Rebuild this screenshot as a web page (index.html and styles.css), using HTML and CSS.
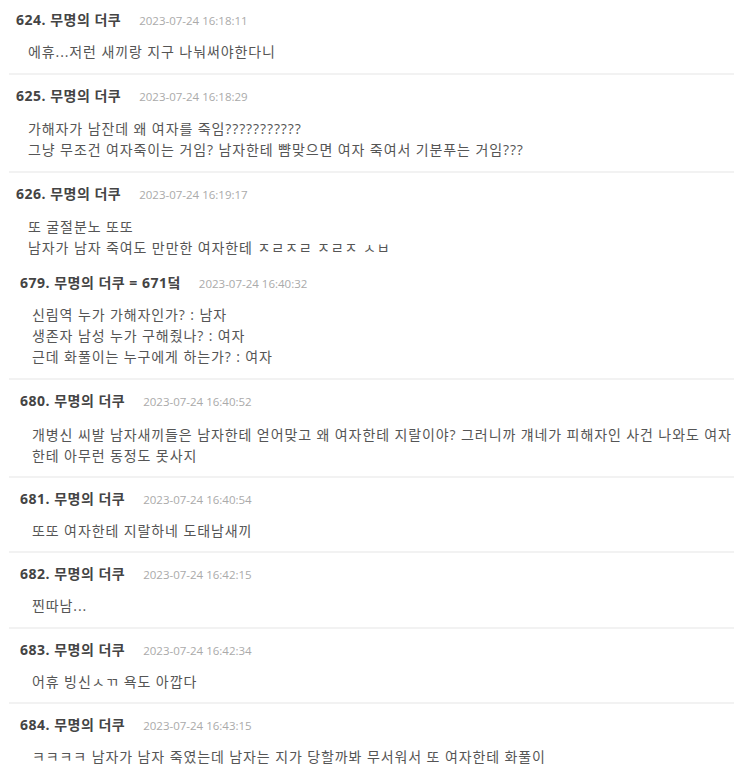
FILE: index.html
```html
<!DOCTYPE html>
<html lang="ko">
<head>
  <meta charset="UTF-8">
  <meta name="viewport" content="width=device-width, initial-scale=1">
  <title>댓글</title>
  <link rel="stylesheet" href="styles.css">
</head>
<body>
  <!-- first capture -->
  <div class="thread">
    <div class="post first">
      <div class="post-head"><span class="num">624. 무명의 더쿠</span><span class="date">2023-07-24 16:18:11</span></div>
      <div class="post-body">에휴...저런 새끼랑 지구 나눠써야한다니</div>
    </div>
    <div class="post multi">
      <div class="post-head"><span class="num">625. 무명의 더쿠</span><span class="date">2023-07-24 16:18:29</span></div>
      <div class="post-body">가해자가 남잔데 왜 여자를 죽임???????????<br>그냥 무조건 여자죽이는 거임? 남자한테 뺨맞으면 여자 죽여서 기분푸는 거임???</div>
    </div>
    <div class="post multi no-line">
      <div class="post-head"><span class="num">626. 무명의 더쿠</span><span class="date">2023-07-24 16:19:17</span></div>
      <div class="post-body">또 굴절분노 또또<br>남자가 남자 죽여도 만만한 여자한테 ㅈㄹㅈㄹ ㅈㄹㅈ ㅅㅂ</div>
    </div>
  </div>

  <!-- second capture -->
  <div class="thread shifted">
    <div class="post joined">
      <div class="post-head"><span class="num">679. 무명의 더쿠 = 671덬</span><span class="date">2023-07-24 16:40:32</span></div>
      <div class="post-body">신림역 누가 가해자인가? : 남자<br>생존자 남성 누가 구해줬나? : 여자<br>근데 화풀이는 누구에게 하는가? : 여자</div>
    </div>
    <div class="post wide">
      <div class="post-head"><span class="num">680. 무명의 더쿠</span><span class="date">2023-07-24 16:40:52</span></div>
      <div class="post-body">개병신 씨발 남자새끼들은 남자한테 얻어맞고 왜 여자한테 지랄이야? 그러니까 걔네가 피해자인 사건 나와도 여자<br>한테 아무런 동정도 못사지</div>
    </div>
    <div class="post tight">
      <div class="post-head"><span class="num">681. 무명의 더쿠</span><span class="date">2023-07-24 16:40:54</span></div>
      <div class="post-body">또또 여자한테 지랄하네 도태남새끼</div>
    </div>
    <div class="post">
      <div class="post-head"><span class="num">682. 무명의 더쿠</span><span class="date">2023-07-24 16:42:15</span></div>
      <div class="post-body">찐따남...</div>
    </div>
    <div class="post tight">
      <div class="post-head"><span class="num">683. 무명의 더쿠</span><span class="date">2023-07-24 16:42:34</span></div>
      <div class="post-body">어휴 빙신ㅅㄲ 욕도 아깝다</div>
    </div>
    <div class="post no-line">
      <div class="post-head"><span class="num">684. 무명의 더쿠</span><span class="date">2023-07-24 16:43:15</span></div>
      <div class="post-body">ㅋㅋㅋㅋ 남자가 남자 죽였는데 남자는 지가 당할까봐 무서워서 또 여자한테 화풀이</div>
    </div>
  </div>
</body>
</html>
```

FILE: styles.css
```css
/* Global */
* {
  box-sizing: border-box;
  margin: 0;
  padding: 0;
}
body {
  background: #fff;
  color: #555;
  font-family: 'Open Sans', 'Noto Sans CJK KR', sans-serif;
  overflow: hidden;
}

/* Comment list */
.post {
  margin-left: 9px;
  padding: 11px 0 11px;
  border-bottom: 2px solid #f2f2f2;
}
.post.first {
  padding-top: 10px;
}
.post.no-line {
  border-bottom: none;
}
.post.joined {
  padding-top: 4px;
}
.post.tight {
  padding-bottom: 10px;
}
.post.wide {
  padding-bottom: 10px;
}
.post-head {
  display: flex;
  align-items: baseline;
  height: 20px;
  line-height: 20px;
  padding-left: 7px;
  white-space: nowrap;
}
.post-head .num {
  font-size: 14px;
  font-weight: bold;
  letter-spacing: 0.5px;
  color: #444;
}
.post-head .date {
  margin-left: 18px;
  font-size: 11.5px;
  color: #aaa;
}
.post-body {
  margin-top: 11px;
  padding-left: 19px;
  font-size: 14px;
  line-height: 21px;
  letter-spacing: 0.9px;
  white-space: nowrap;
}
.multi .post-body {
  margin-top: 12px;
}
.wide .post-body {
  margin-top: 13px;
}

/* second capture sits a bit further right */
.shifted .post-head {
  padding-left: 11px;
}
.shifted .post-body {
  padding-left: 23px;
}
```
